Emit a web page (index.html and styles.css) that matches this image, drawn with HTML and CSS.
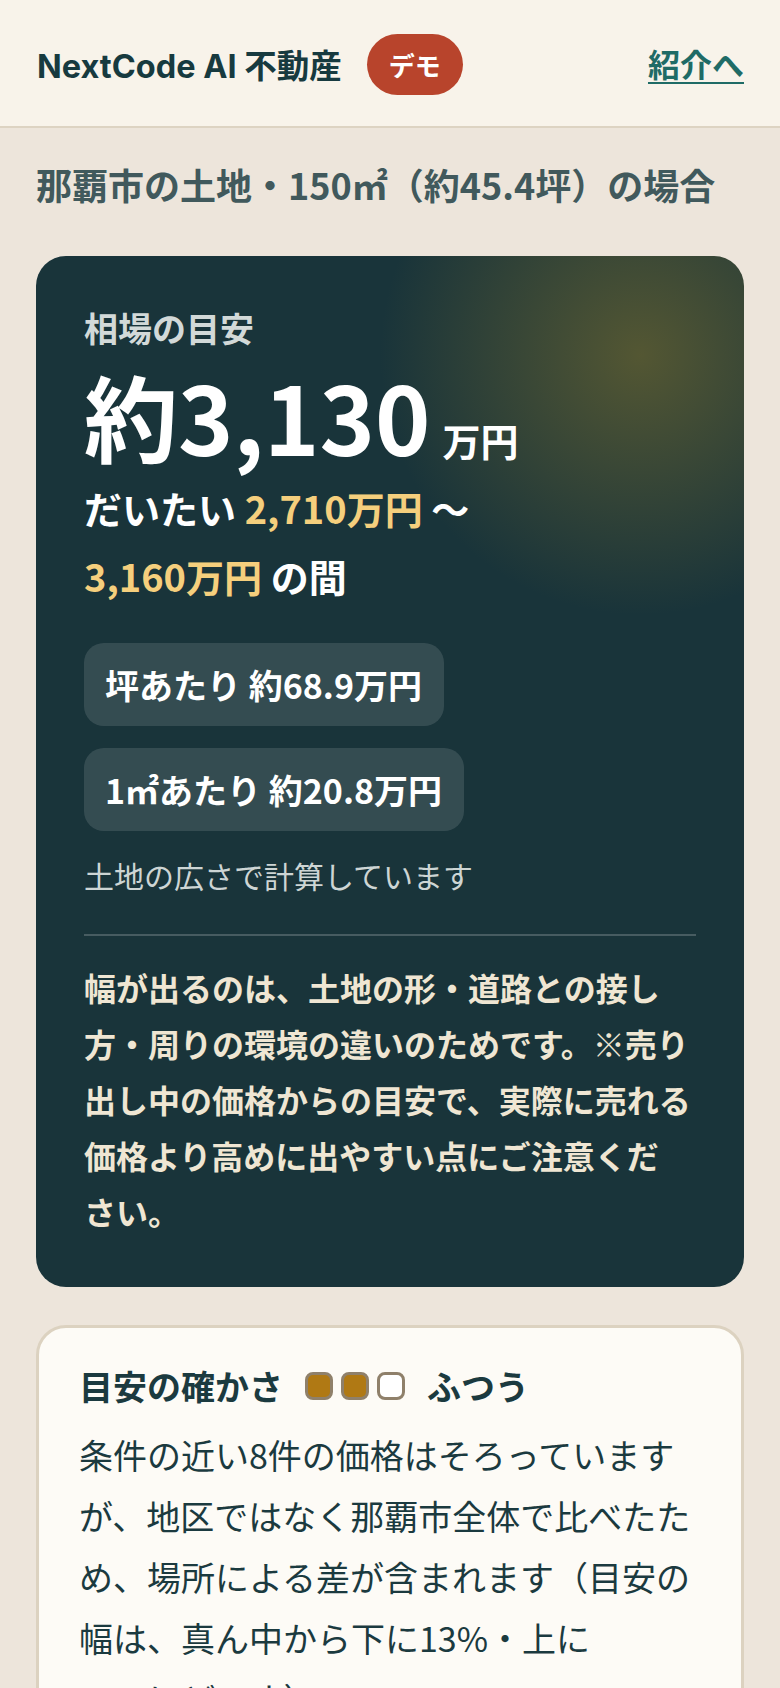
FILE: index.html
```html
<!DOCTYPE html>
<html lang="ja">
<head>
  <meta charset="UTF-8">
  <title>NextCode AI 不動産 デモ</title>
  <link rel="stylesheet" href="styles.css">
</head>
<body>
  <header class="topbar">
    <div class="brand">
      <span class="brand-name">NextCode AI 不動産</span>
      <span class="badge">デモ</span>
    </div>
    <a class="back-link" href="#">紹介へ</a>
  </header>

  <main class="page">
    <h1 class="case-title">那覇市の土地・150㎡（約45.4坪）の場合</h1>

    <section class="estimate">
      <p class="estimate-label">相場の目安</p>
      <p class="estimate-price">約3,130<span class="unit">万円</span></p>
      <p class="estimate-range">だいたい <span class="hl">2,710万円</span> 〜 <span class="hl">3,160万円</span> の間</p>
      <ul class="unit-prices">
        <li>坪あたり 約68.9万円</li>
        <li>1㎡あたり 約20.8万円</li>
      </ul>
      <p class="estimate-note">土地の広さで計算しています</p>
      <p class="estimate-caveat">幅が出るのは、土地の形・道路との接し方・周りの環境の違いのためです。※売り出し中の価格からの目安で、実際に売れる価格より高めに出やすい点にご注意くだ<span class="nowrap">さい。</span></p>
    </section>

    <section class="confidence">
      <h2 class="confidence-head">
        目安の確かさ
        <span class="dots"><i class="on"></i><i class="on"></i><i></i></span>
        ふつう
      </h2>
      <p class="confidence-text">条件の近い8件の価格はそろっていますが、地区ではなく那覇市全体で比べたため、場所による差が含まれます（目安の幅は、真ん中から下に13%・上に<span class="nowrap">10%ほどです</span>）。</p>
    </section>
  </main>
</body>
</html>
```

FILE: styles.css
```css
body {
  margin: 0;
  background: #ede5db;
  color: #1b3a3f;
  font-family: "Noto Sans CJK JP", sans-serif;
}
p {
  margin: 0;
}

.topbar {
  display: flex;
  align-items: center;
  height: 128px;
  padding: 0 36px 0 37px;
  background: #f8f3ea;
  border-bottom: 2px solid #ddd3c2;
  box-sizing: border-box;
}
.brand {
  display: flex;
  align-items: center;
  gap: 25px;
}
.brand-name {
  font-family: "Inter", "Noto Sans CJK JP", sans-serif;
  font-size: 32.5px;
  font-weight: 700;
  color: #173a3f;
}
.badge {
  background: #b8442c;
  color: #fff;
  font-size: 26px;
  font-weight: 700;
  line-height: 45px;
  padding: 8px 22px;
  border-radius: 31px;
  margin-top: 2px;
}
.back-link {
  margin-left: auto;
  font-size: 32px;
  font-weight: 700;
  color: #1f6b66;
  text-decoration: underline;
  text-decoration-thickness: 2px;
  text-underline-offset: 5px;
}

.page {
  padding: 0 36px;
}
.case-title {
  margin: 29px 0 45px;
  font-size: 36px;
  line-height: 54px;
  font-weight: 700;
  color: #41595c;
}

.estimate {
  padding: 48px;
  border-radius: 30px;
  color: #fff;
  background: radial-gradient(circle at 604px 99px, rgba(106, 100, 48, 0.72) 0, rgba(106, 100, 48, 0) 260px), #19343a;
}
.estimate-label {
  font-size: 34px;
  line-height: 48px;
  font-weight: 700;
  color: #d2d9d8;
}
.estimate-price {
  margin-top: 16px;
  font-size: 94px;
  line-height: 1;
  font-weight: 700;
}
.estimate-price .unit {
  margin-left: 12px;
  font-size: 38px;
}
.estimate-range {
  max-width: 440px;
  margin-top: 12px;
  font-size: 38px;
  line-height: 68px;
  font-weight: 700;
}
.hl {
  color: #f5cf7d;
}
.unit-prices {
  list-style: none;
  margin: 33px 0 0;
  padding: 0;
  display: flex;
  flex-direction: column;
  align-items: flex-start;
  gap: 22px;
}
.unit-prices li {
  background: rgba(255, 255, 255, 0.12);
  border-radius: 20px;
  padding: 16px 22px 16px 21px;
  font-size: 34px;
  line-height: 51px;
  font-weight: 700;
}
.estimate-note {
  margin-top: 22px;
  padding-bottom: 36px;
  border-bottom: 2px solid rgba(255, 255, 255, 0.2);
  font-size: 30px;
  line-height: 45px;
  color: #cdd5d4;
}
.estimate-caveat {
  margin-top: 23px;
  font-size: 32px;
  line-height: 56px;
  font-weight: 700;
  color: #efe6d3;
}

.confidence {
  margin-top: 38px;
  padding: 32px 40px;
  background: #fdfbf6;
  border: 3px solid #dcd2c0;
  border-radius: 30px;
}
.confidence-head {
  display: flex;
  align-items: center;
  gap: 22px;
  margin: 0;
  font-size: 34px;
  line-height: 51px;
  font-weight: 700;
}
.dots {
  display: flex;
  gap: 8px;
}
.dots i {
  width: 22px;
  height: 22px;
  border: 3px solid #8f806a;
  border-radius: 8px;
  background: #fff;
}
.dots i.on {
  background: #b07914;
}
.confidence-text {
  margin-top: 13px;
  font-size: 34px;
  line-height: 61px;
}
.nowrap {
  white-space: nowrap;
}
```
